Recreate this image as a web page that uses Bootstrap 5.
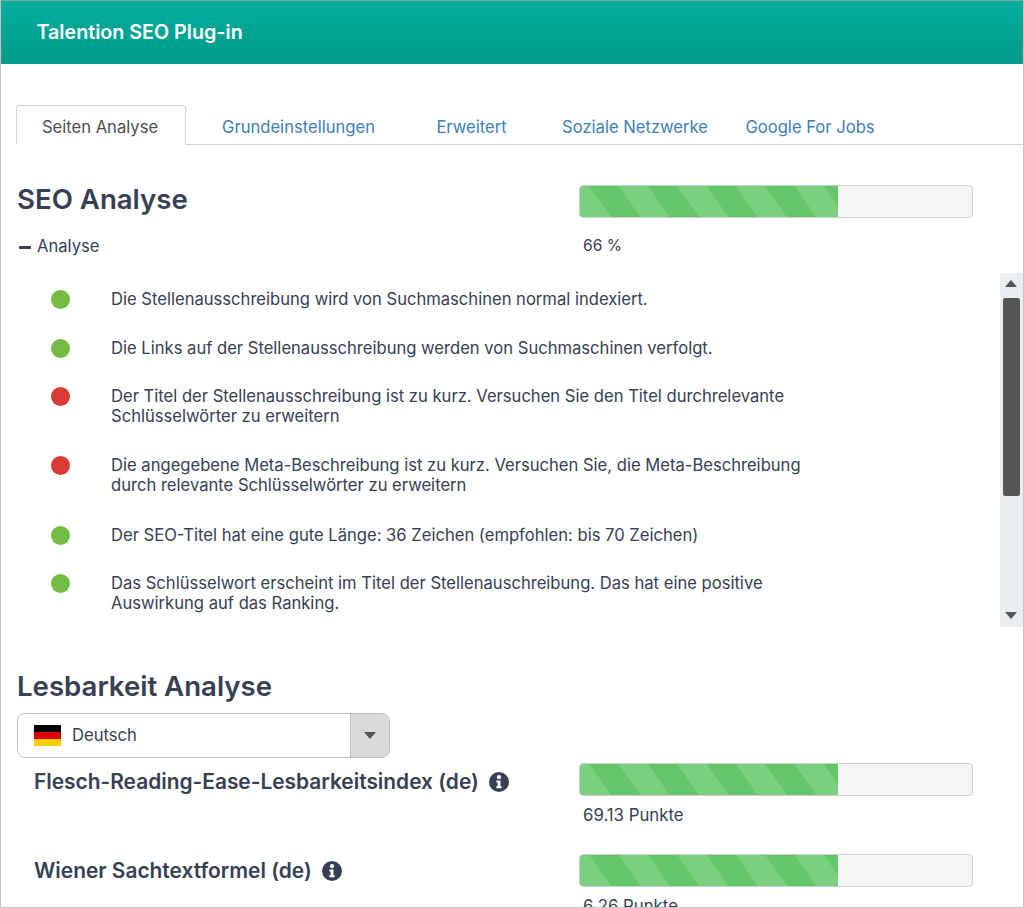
<!DOCTYPE html>
<html lang="de">
<head>
<meta charset="utf-8">
<title>Talention SEO Plug-in</title>
<link href="https://cdn.jsdelivr.net/npm/bootstrap@5.3.0/dist/css/bootstrap.min.css" rel="stylesheet">
<style>
html,body{height:908px;overflow:hidden;background:#fff}
body{font-family:Inter,"Liberation Sans",sans-serif;font-size:16.6px;color:#363f54;line-height:20px}
.frame{height:908px;border:1px solid #c4c4c4;border-top:0;overflow:hidden}
.topbar{height:64px;margin:0 -1px;padding-left:36.5px;background:linear-gradient(#00ae9c,#009a8a);border-top:1px solid #7fa8a2;color:#fff;font-weight:600;font-size:19.7px;line-height:62px}
.content{padding:41px 15px 0 15px}
.tabbar{height:40px;border-bottom:1px solid #d4d4d4;margin-right:-15px}
.tabbar .nav-link{height:40px;padding:0;font-size:16.6px;line-height:43px;text-align:center;color:#3d7fbd;border:1px solid transparent;border-radius:4px 4px 0 0;margin:0}
.tabbar .nav-link.active{color:#4f4f4f;border-color:#d4d4d4 #d4d4d4 #fff;background:#fff;padding-right:2px}
.t1{width:170px}.t2{width:225px}.t3{width:122px;padding-right:1px!important}.t4{width:204px}.t5{width:146px}
.sec-row{display:flex;justify-content:flex-start}
.left-col{width:563px;flex:none}
.seo-row{margin-top:40px;height:33px}
.h-sec,.h-les{font-size:27.6px;font-weight:600;line-height:30px;margin:0 0 0 1px;color:#363f54}
.h-sec{margin-top:-1px}
.bar-out{width:394px;height:33px;background:#f5f5f5;border:1px solid #cfcfcf;border-radius:4px;overflow:hidden;margin:0}
.bar-in{height:100%;background-image:repeating-linear-gradient(55deg,#64c668 0 1.5px,#7ad07e 1.5px 25.5px,#64c668 25.5px 48px)}
.ana-row{margin-top:18px;height:20px}
.minus{display:inline-block;width:12px;height:3px;background:#363f54;border-radius:1px;margin:0 6px 0 3px;vertical-align:middle}
.val{padding-left:4px;font-size:15.6px}
.checks{position:relative;margin:17px -15px 0 0;height:354px;padding-right:22px}
.chk-item{display:flex;gap:0;padding-left:35px;width:810px}
.pt-a{padding-top:16px}.pt-b{padding-top:29px}.pt-c{padding-top:28px}.pt-d{padding-top:30px}
.dot{flex:none;width:19px;height:19px;border-radius:50%;margin-right:41px;margin-top:1px}
.ok{background:#72bc43}.bad{background:#da3c35}
.track{position:absolute;right:0;top:0;bottom:0;width:23px;background:#e9eef0}
.thumb{position:absolute;left:3px;right:3px;top:25px;height:198px;background:#555;border-radius:2px}
.arr-u,.arr-d{position:absolute;left:5px;width:0;height:0;border-left:6.5px solid transparent;border-right:6.5px solid transparent}
.arr-u{top:7px;border-bottom:7px solid #555}.arr-d{bottom:8px;border-top:7px solid #555}
.lesb{margin-top:44px}
.langsel{width:373px;height:45px;margin:12px 0 0 1px;border:1px solid #bdbdbd;border-radius:8px;overflow:hidden;display:flex}
.langtxt{flex:1;display:flex;align-items:center;padding-left:16px;font-size:16.6px}
.lang-name{margin-bottom:2px}
.flag{width:27px;height:21px;margin-right:11px;background:linear-gradient(#000 0 33.3%,#dd0000 33.3% 66.6%,#ffce00 66.6%)}
.langbtn{width:39px;background:#dadada;border-left:1px solid #bdbdbd;display:flex;align-items:center;justify-content:center}
.caret-d{width:0;height:0;border-left:6.5px solid transparent;border-right:6.5px solid transparent;border-top:7px solid #555}
.metric{padding-left:18px;font-size:20.9px;font-weight:600;line-height:24px;display:flex;align-items:center;gap:10px}
.mt-a{padding-top:1px;height:36px}.mt-b{height:33px}
.metric svg{flex:none}
.m1{margin-top:5px}.m2{margin-top:29px}
.pts{margin-top:9px;padding-left:4px;font-size:16.8px}
</style>
</head>
<body>
<div class="frame">
  <div class="topbar">Talention SEO Plug-in</div>
  <div class="content">
    <ul class="nav tabbar">
      <li class="nav-item"><a class="nav-link active t1" href="#">Seiten Analyse</a></li>
      <li class="nav-item"><a class="nav-link t2" href="#">Grundeinstellungen</a></li>
      <li class="nav-item"><a class="nav-link t3" href="#">Erweitert</a></li>
      <li class="nav-item"><a class="nav-link t4" href="#">Soziale Netzwerke</a></li>
      <li class="nav-item"><a class="nav-link t5" href="#">Google For Jobs</a></li>
    </ul>

    <div class="sec-row seo-row">
      <div class="left-col"><h2 class="h-sec">SEO Analyse</h2></div>
      <div class="bar-out"><div class="bar-in" style="width:65.8%"></div></div>
    </div>
    <div class="sec-row ana-row">
      <div class="left-col"><span class="minus"></span>Analyse</div>
      <div class="val">66 %</div>
    </div>

    <div class="checks">
      <div class="chk-item pt-a"><span class="dot ok"></span><span>Die Stellenausschreibung wird von Suchmaschinen normal indexiert.</span></div>
      <div class="chk-item pt-b"><span class="dot ok"></span><span>Die Links auf der Stellenausschreibung werden von Suchmaschinen verfolgt.</span></div>
      <div class="chk-item pt-c"><span class="dot bad"></span><span>Der Titel der Stellenausschreibung ist zu kurz. Versuchen Sie den Titel durchrelevante Schlüsselwörter zu erweitern</span></div>
      <div class="chk-item pt-b"><span class="dot bad"></span><span>Die angegebene Meta-Beschreibung ist zu kurz. Versuchen Sie, die Meta-Beschreibung durch relevante Schlüsselwörter zu erweitern</span></div>
      <div class="chk-item pt-d"><span class="dot ok"></span><span>Der SEO-Titel hat eine gute Länge: 36 Zeichen (empfohlen: bis 70 Zeichen)</span></div>
      <div class="chk-item pt-c"><span class="dot ok"></span><span>Das Schlüsselwort erscheint im Titel der Stellenauschreibung. Das hat eine positive Auswirkung auf das Ranking.</span></div>
      <div class="track"><span class="arr-u"></span><span class="thumb"></span><span class="arr-d"></span></div>
    </div>

    <div class="lesb">
      <h2 class="h-les">Lesbarkeit Analyse</h2>
      <div class="langsel">
        <div class="langtxt"><span class="flag"></span><span class="lang-name">Deutsch</span></div>
        <div class="langbtn"><span class="caret-d"></span></div>
      </div>
      <div class="sec-row m1">
        <div class="left-col metric mt-a">Flesch-Reading-Ease-Lesbarkeitsindex (de)
          <svg width="20" height="20" viewBox="0 0 20 20"><circle cx="10" cy="10" r="10" fill="#363f54"/><circle cx="10" cy="5.2" r="2.1" fill="#fff"/><path d="M7.4 8.4h4.1v5.9h1.2v2H7.3v-2h1.3v-3.9H7.4z" fill="#fff"/></svg>
        </div>
        <div>
          <div class="bar-out"><div class="bar-in" style="width:65.8%"></div></div>
          <div class="pts">69.13 Punkte</div>
        </div>
      </div>
      <div class="sec-row m2">
        <div class="left-col metric mt-b">Wiener Sachtextformel (de)
          <svg width="20" height="20" viewBox="0 0 20 20"><circle cx="10" cy="10" r="10" fill="#363f54"/><circle cx="10" cy="5.2" r="2.1" fill="#fff"/><path d="M7.4 8.4h4.1v5.9h1.2v2H7.3v-2h1.3v-3.9H7.4z" fill="#fff"/></svg>
        </div>
        <div>
          <div class="bar-out"><div class="bar-in" style="width:65.8%"></div></div>
          <div class="pts">6.26 Punkte</div>
        </div>
      </div>
    </div>
  </div>
</div>
<script src="https://cdn.jsdelivr.net/npm/bootstrap@5.3.0/dist/js/bootstrap.bundle.min.js"></script>
</body>
</html>
